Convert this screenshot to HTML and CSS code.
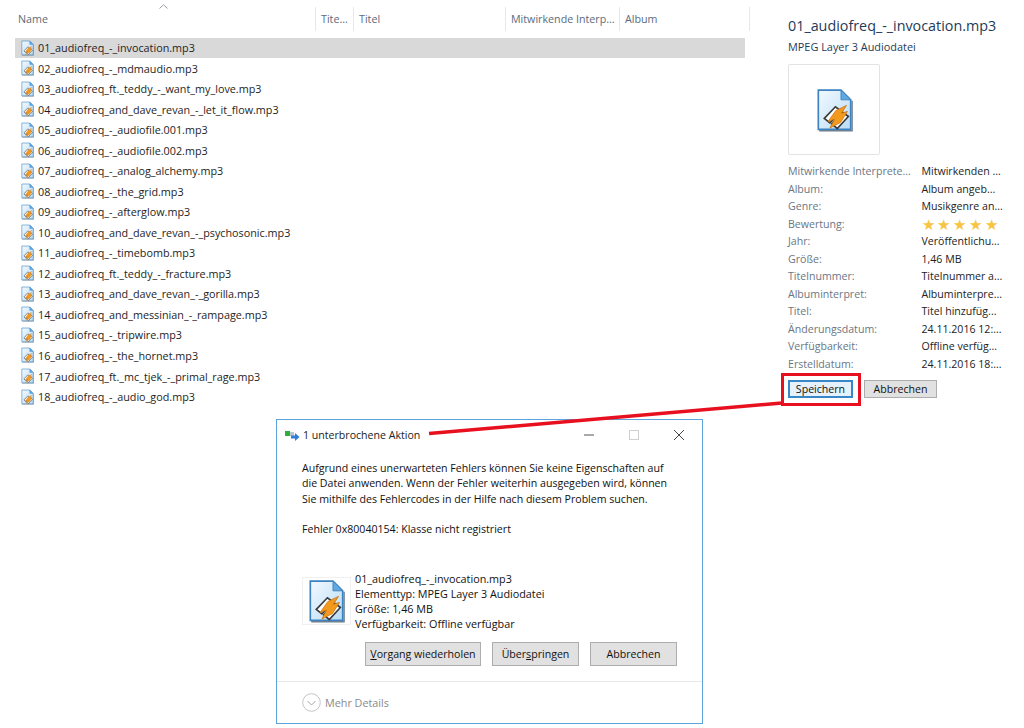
FILE: index.html
```html
<!DOCTYPE html>
<html lang="de">
<head>
<meta charset="utf-8">
<title>Explorer</title>
<link rel="stylesheet" href="styles.css">
</head>
<body>
<svg class="defs" width="0" height="0" aria-hidden="true">
  <defs>
    <linearGradient id="paper" x1="0" y1="0" x2="1" y2="1">
      <stop offset="0" stop-color="#f2f9ff"/>
      <stop offset="1" stop-color="#b9dcf6"/>
    </linearGradient>
    <symbol id="mp3" viewBox="0 0 40 48">
      <path d="M2.5 2.5H27L37.5 13V45H2.5Z" fill="url(#paper)" stroke="#3d83c0" stroke-width="1.8"/>
      <path d="M3.5 46.5H39V14" fill="none" stroke="#6d7f90" stroke-width="1.6"/>
      <path d="M27 2.5V13H37.5Z" fill="#5fa8e2" stroke="#3d83c0" stroke-width="1"/>
      <path d="M9 33L21 20.5L27 25L15 38Z" fill="#fff" stroke="#3a3a3a" stroke-width="1.8"/>
      <path d="M17 39L29 26.5L35 31L23 44Z" fill="#fff" stroke="#3a3a3a" stroke-width="1.8"/>
      <path d="M33 19L21.5 24.5L13 36.5L20 34L15 43.5L26.5 37.5L34 25.5L27.5 27.5Z" fill="#f39a1e" stroke="#c8700c" stroke-width=".8"/>
    </symbol>
  </defs>
</svg>

<main class="explorer">
  <section class="files">
    <header class="columns">
      <span class="sort-arrow"><svg width="9" height="5" viewBox="0 0 9 5"><path d="M.5 4.5L4.5.8L8.5 4.5" fill="none" stroke="#9aa0a8"/></svg></span>
      <span class="col col-name">Name</span>
      <span class="col col-track">Tite...</span>
      <span class="col col-title">Titel</span>
      <span class="col col-artist">Mitwirkende Interp...</span>
      <span class="col col-album">Album</span>
    </header>
    <ul class="file-list">
      <li class="file selected"><svg class="file-icon"><use href="#mp3"/></svg>01_audiofreq_-_invocation.mp3</li>
      <li class="file"><svg class="file-icon"><use href="#mp3"/></svg>02_audiofreq_-_mdmaudio.mp3</li>
      <li class="file"><svg class="file-icon"><use href="#mp3"/></svg>03_audiofreq_ft._teddy_-_want_my_love.mp3</li>
      <li class="file"><svg class="file-icon"><use href="#mp3"/></svg>04_audiofreq_and_dave_revan_-_let_it_flow.mp3</li>
      <li class="file"><svg class="file-icon"><use href="#mp3"/></svg>05_audiofreq_-_audiofile.001.mp3</li>
      <li class="file"><svg class="file-icon"><use href="#mp3"/></svg>06_audiofreq_-_audiofile.002.mp3</li>
      <li class="file"><svg class="file-icon"><use href="#mp3"/></svg>07_audiofreq_-_analog_alchemy.mp3</li>
      <li class="file"><svg class="file-icon"><use href="#mp3"/></svg>08_audiofreq_-_the_grid.mp3</li>
      <li class="file"><svg class="file-icon"><use href="#mp3"/></svg>09_audiofreq_-_afterglow.mp3</li>
      <li class="file"><svg class="file-icon"><use href="#mp3"/></svg>10_audiofreq_and_dave_revan_-_psychosonic.mp3</li>
      <li class="file"><svg class="file-icon"><use href="#mp3"/></svg>11_audiofreq_-_timebomb.mp3</li>
      <li class="file"><svg class="file-icon"><use href="#mp3"/></svg>12_audiofreq_ft._teddy_-_fracture.mp3</li>
      <li class="file"><svg class="file-icon"><use href="#mp3"/></svg>13_audiofreq_and_dave_revan_-_gorilla.mp3</li>
      <li class="file"><svg class="file-icon"><use href="#mp3"/></svg>14_audiofreq_and_messinian_-_rampage.mp3</li>
      <li class="file"><svg class="file-icon"><use href="#mp3"/></svg>15_audiofreq_-_tripwire.mp3</li>
      <li class="file"><svg class="file-icon"><use href="#mp3"/></svg>16_audiofreq_-_the_hornet.mp3</li>
      <li class="file"><svg class="file-icon"><use href="#mp3"/></svg>17_audiofreq_ft._mc_tjek_-_primal_rage.mp3</li>
      <li class="file"><svg class="file-icon"><use href="#mp3"/></svg>18_audiofreq_-_audio_god.mp3</li>
    </ul>
  </section>

  <aside class="details">
    <h1 class="details-name">01_audiofreq_-_invocation.mp3</h1>
    <p class="details-type">MPEG Layer 3 Audiodatei</p>
    <div class="thumb"><svg class="thumb-icon"><use href="#mp3"/></svg></div>
    <dl class="props">
      <dt>Mitwirkende Interprete...</dt><dd>Mitwirkenden ...</dd>
      <dt>Album:</dt><dd>Album angeb...</dd>
      <dt>Genre:</dt><dd>Musikgenre an...</dd>
      <dt>Bewertung:</dt><dd class="stars">★★★★★</dd>
      <dt>Jahr:</dt><dd>Veröffentlichu...</dd>
      <dt>Größe:</dt><dd>1,46 MB</dd>
      <dt>Titelnummer:</dt><dd>Titelnummer a...</dd>
      <dt>Albuminterpret:</dt><dd>Albuminterpre...</dd>
      <dt>Titel:</dt><dd>Titel hinzufüg...</dd>
      <dt>Änderungsdatum:</dt><dd>24.11.2016 12:...</dd>
      <dt>Verfügbarkeit:</dt><dd>Offline verfüg...</dd>
      <dt>Erstelldatum:</dt><dd>24.11.2016 18:...</dd>
    </dl>
    <div class="details-actions">
      <button class="btn btn-save">Speichern</button>
      <button class="btn btn-cancel">Abbrechen</button>
    </div>
  </aside>
</main>

<div class="callout-box"></div>
<svg class="callout-line" width="1024" height="728" aria-hidden="true"><path d="M429 433.5L782 403" stroke="#e8101f" stroke-width="3.4" fill="none"/></svg>

<section class="dialog">
  <header class="dialog-title">
    <svg class="dialog-icon" width="15" height="12" viewBox="0 0 15 12"><rect x="0" y="2" width="5" height="5" fill="#2fae3c"/><rect x="5" y="3" width="4" height="4" fill="#b9c4ce"/><path d="M6 6.5H10V4L14.5 8L10 12V9.5H6Z" fill="#2f7fd8"/></svg>
    <span class="dialog-caption">1 unterbrochene Aktion</span>
    <span class="win-controls">
      <svg width="12" height="12" viewBox="0 0 12 12"><path d="M1 6H11" stroke="#555"/></svg>
      <svg width="12" height="12" viewBox="0 0 12 12"><rect x="1.5" y="1.5" width="9" height="9" fill="none" stroke="#d0d0d0"/></svg>
      <svg width="12" height="12" viewBox="0 0 12 12"><path d="M1 1L11 11M11 1L1 11" stroke="#444"/></svg>
    </span>
  </header>
  <div class="dialog-body">
    <p class="message">Aufgrund eines unerwarteten Fehlers können Sie keine Eigenschaften auf<br>die Datei anwenden. Wenn der Fehler weiterhin ausgegeben wird, können<br>Sie mithilfe des Fehlercodes in der Hilfe nach diesem Problem suchen.</p>
    <p class="error-code">Fehler 0x80040154: Klasse nicht registriert</p>
    <div class="file-summary">
      <div class="summary-thumb"><svg class="summary-icon"><use href="#mp3"/></svg></div>
      <div class="summary-text">
        <div>01_audiofreq_-_invocation.mp3</div>
        <div>Elementtyp: MPEG Layer 3 Audiodatei</div>
        <div>Größe: 1,46 MB</div>
        <div>Verfügbarkeit: Offline verfügbar</div>
      </div>
    </div>
    <div class="dialog-actions">
      <button class="btn dlg-btn dlg-retry"><u>V</u>organg wiederholen</button>
      <button class="btn dlg-btn dlg-skip">Über<u>s</u>pringen</button>
      <button class="btn dlg-btn dlg-abort">Abbrechen</button>
    </div>
  </div>
  <footer class="dialog-footer">
    <svg width="19" height="19" viewBox="0 0 19 19"><circle cx="9.5" cy="9.5" r="8.8" fill="none" stroke="#c4c4c4"/><path d="M5.5 8L9.5 12L13.5 8" fill="none" stroke="#a8a8a8"/></svg>
    <span>Mehr Details</span>
  </footer>
</section>
</body>
</html>
```

FILE: styles.css
```css
* { box-sizing: border-box; }
html, body { margin: 0; height: 100%; }
body {
  position: relative;
  width: 1024px;
  height: 728px;
  overflow: hidden;
  background: #fff;
  font-family: "Open Sans", "Noto Sans", sans-serif;
  font-size: 10.6px;
  color: #111;
}
.defs { position: absolute; }
p, h1, dl, dd, ul { margin: 0; padding: 0; }

.explorer { display: flex; height: 100%; }
.files { width: 763px; padding: 7px 0 0 15px; }

.columns {
  position: relative;
  display: flex;
  height: 24px;
  width: 735px;
  color: #5b6b7c;
  font-size: 10.7px;
  line-height: 24px;
}
.sort-arrow { position: absolute; left: 144px; top: -3px; line-height: 0; }
.col { padding-left: 5px; border-right: 1px solid #e6e9ec; white-space: nowrap; overflow: hidden; }
.col-name { width: 301px; padding-left: 3px; }
.col-track { width: 38px; }
.col-title { width: 152px; }
.col-artist { width: 114px; }
.col-album { width: 130px; }

.file-list { list-style: none; margin-top: 6.5px; width: 730px; }
.file {
  display: flex;
  align-items: center;
  gap: 4px;
  height: 20.53px;
  padding-left: 6px;
  font-size: 10.8px;
  white-space: nowrap;
  color: #1e1e1e;
}
.selected { background: #d9d9d9; }
.file-icon { width: 13px; height: 16px; flex: none; }

.details { width: 261px; padding: 16px 0 0 25px; }
.details-name { font-size: 14.34px; font-weight: 400; line-height: 20px; color: #1f3b57; white-space: nowrap; }
.details-type { margin-top: 3px; font-size: 10.9px; line-height: 16px; color: #1f3b57; }
.thumb {
  display: flex;
  align-items: center;
  justify-content: center;
  width: 92px;
  height: 91px;
  margin-top: 9px;
  border: 1px solid #e3e3e3;
  border-radius: 2px;
}
.thumb-icon { width: 37px; height: 46px; }

.props {
  display: grid;
  grid-template-columns: 133.5px 1fr;
  grid-auto-rows: 17.5px;
  margin-top: 8px;
  line-height: 17.5px;
  white-space: nowrap;
}
.props dt { color: #6b7683; }
.props dd { color: #222; }
.props .stars { color: #f6c544; font-size: 14.5px; letter-spacing: 2.9px; line-height: 17px; }

.details-actions { display: flex; gap: 11px; margin-top: 7px; }
.btn {
  padding: 0;
  font: inherit;
  color: #111;
  background: #e1e1e1;
  border: 1px solid #adadad;
}
.btn-save { width: 65px; height: 18px; background: #e5f1fb; border: 2px solid #3a87c8; }
.btn-cancel { width: 73px; height: 18px; }

.callout-box {
  position: absolute;
  left: 781px;
  top: 373px;
  width: 80px;
  height: 33px;
  border: 3px solid #e8101f;
}
.callout-line { position: absolute; left: 0; top: 0; pointer-events: none; z-index: 2; }

.dialog {
  position: absolute;
  left: 276px;
  top: 419px;
  width: 427px;
  height: 305px;
  display: flex;
  flex-direction: column;
  background: #fff;
  border: 1px solid #5ba4dc;
}
.dialog-title { display: flex; align-items: center; height: 30px; padding: 0 17px 0 8px; flex: none; }
.dialog-icon { margin-right: 3px; }
.dialog-caption { color: #222; }
.win-controls { display: flex; gap: 33px; margin-left: auto; }
.dialog-body { flex: 1; padding-left: 25px; }
.message { margin-top: 11px; line-height: 15.3px; white-space: nowrap; }
.error-code { margin-top: 15px; line-height: 15px; }
.file-summary { display: flex; margin-top: 40px; }
.summary-thumb {
  display: flex;
  align-items: center;
  justify-content: center;
  flex: none;
  width: 49px;
  height: 48px;
  border: 1px solid #f0f0f0;
}
.summary-icon { width: 37px; height: 46px; }
.summary-text { margin: -6px 0 0 4px; font-size: 10.8px; line-height: 15px; white-space: nowrap; }
.dialog-actions { display: flex; gap: 11px; padding-left: 63px; margin-top: 11px; }
.dlg-btn { height: 24px; }
.dlg-retry { width: 116px; }
.dlg-skip { width: 87px; }
.dlg-abort { width: 87px; }
.dialog-footer {
  display: flex;
  align-items: center;
  gap: 4px;
  height: 42px;
  flex: none;
  padding-left: 25px;
  border-top: 1px solid #e8e8e8;
  color: #8a8a8a;
  font-size: 10.8px;
}
```
